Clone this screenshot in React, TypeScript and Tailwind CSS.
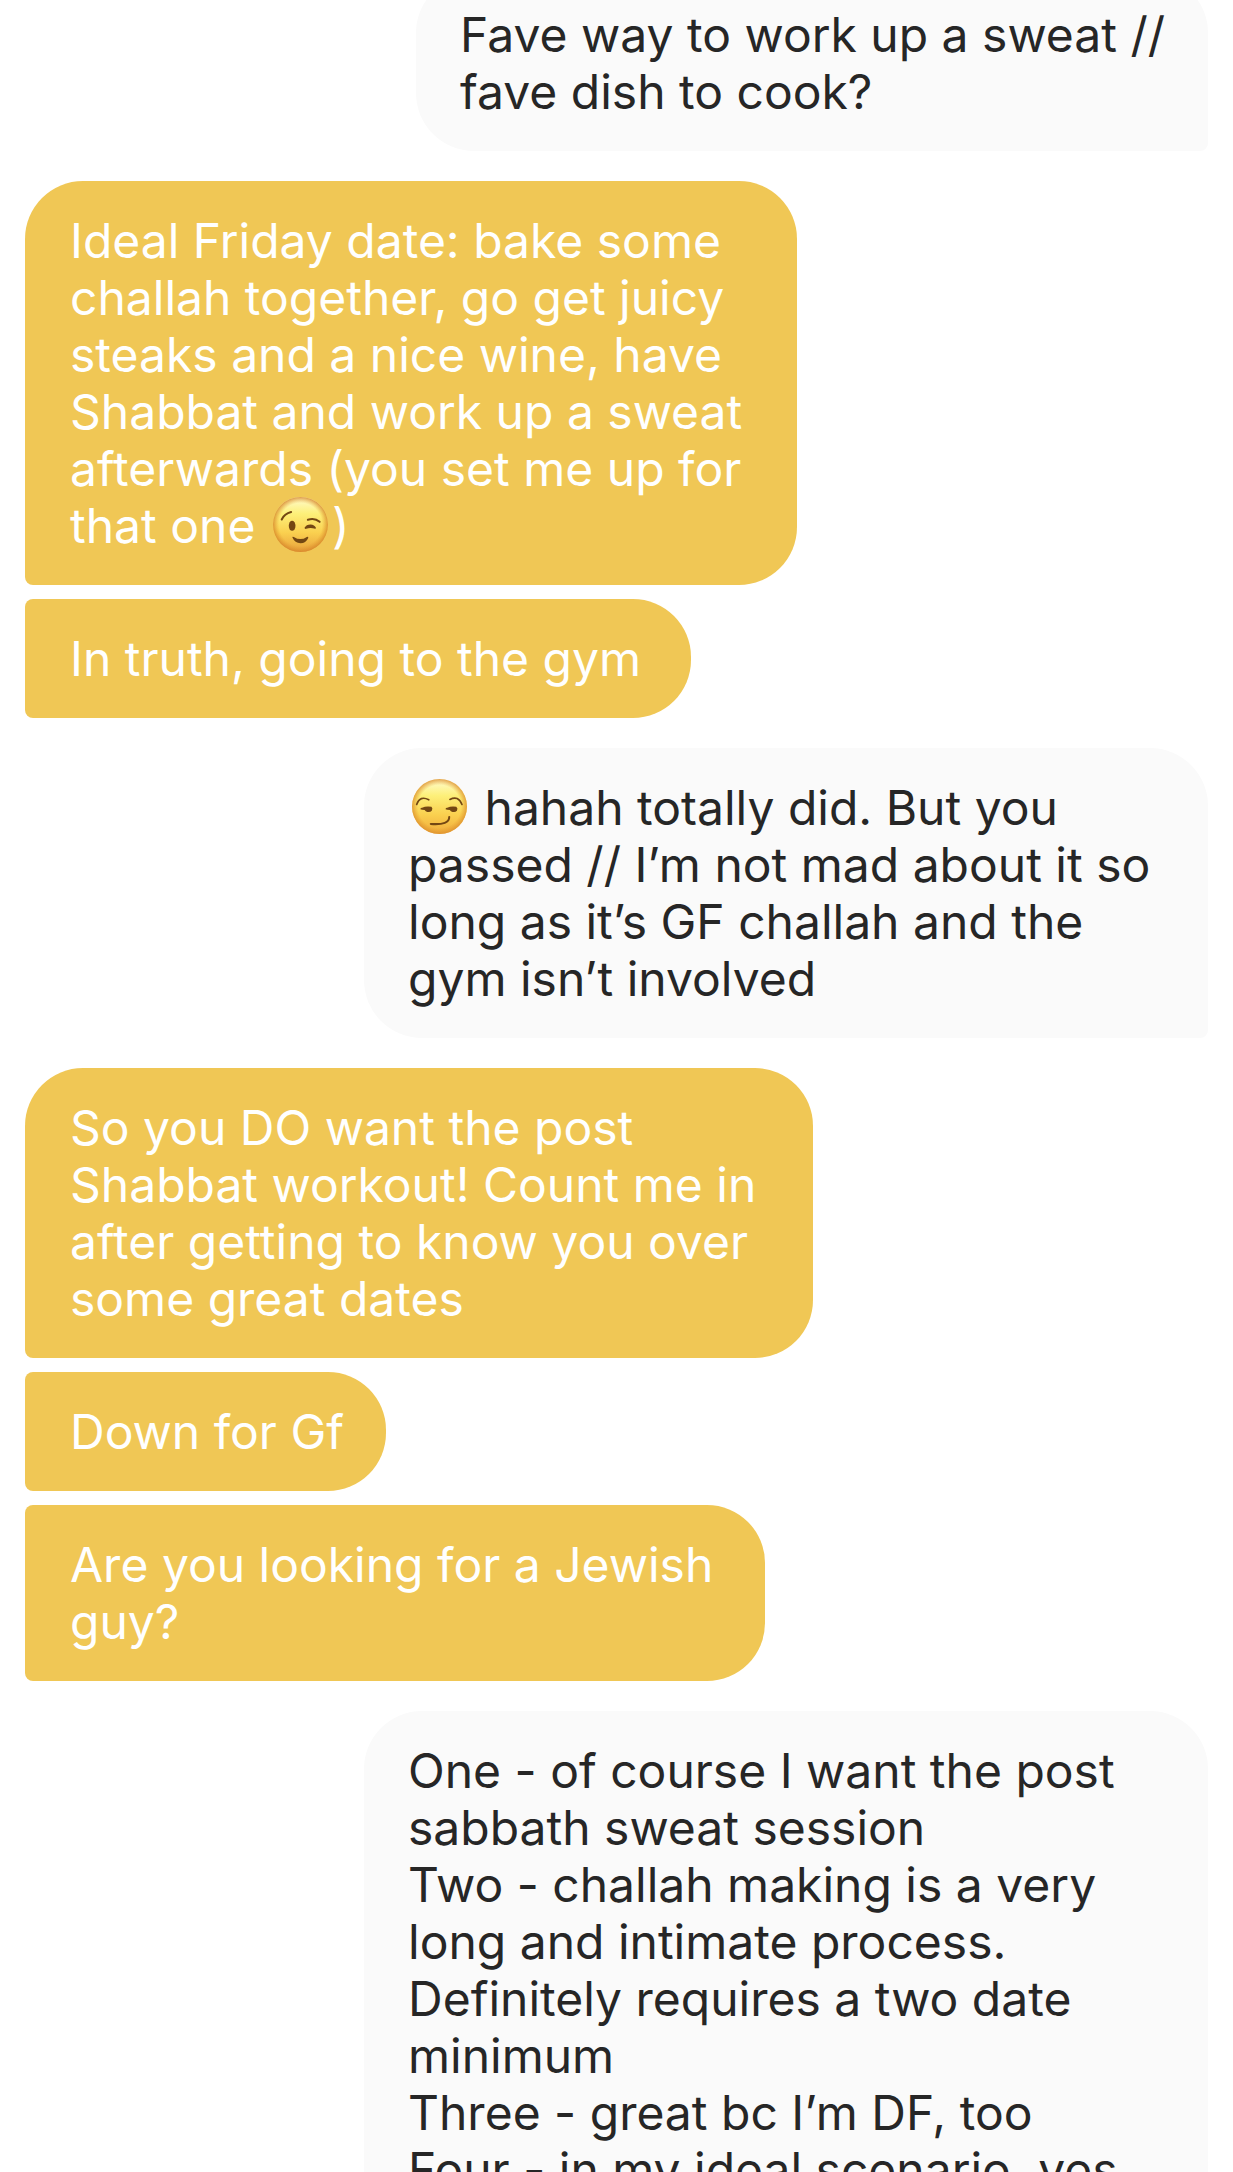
import clsx from "clsx";
import type { ReactNode } from "react";

function WinkEmoji() {
  return (
    <svg viewBox="44 26 164 164" className="mx-1 inline-block size-[55px] align-[-9px]" role="img" aria-label="winking face">
      <defs>
        <linearGradient id="wink-face" x1="0" y1="0" x2="0" y2="1">
          <stop offset="0" stopColor="#fffbd0" />
          <stop offset="0.3" stopColor="#fdf07a" />
          <stop offset="0.65" stopColor="#fad04f" />
          <stop offset="1" stopColor="#e8a03c" />
        </linearGradient>
        <radialGradient id="wink-edge">
          <stop offset="0.78" stopColor="#e39a2c" stopOpacity="0" />
          <stop offset="1" stopColor="#d5842a" stopOpacity="0.8" />
        </radialGradient>
      </defs>
      <circle cx="126" cy="108" r="82" fill="url(#wink-face)" />
      <circle cx="126" cy="108" r="82" fill="url(#wink-edge)" />
      <ellipse cx="101" cy="112" rx="10" ry="15" fill="#734713" />
      <g fill="none" stroke="#734713" strokeLinecap="round">
        <path d="M70 93 Q78 76 98 71" strokeWidth="6" />
        <path d="M148 94 Q168 87 183 100" strokeWidth="6" />
      </g>
      <path d="M138 118 Q143 108 156 108 Q168 109 172 118 Q172 122 167 120 Q155 116 143 121 Q138 122 138 118 Z" fill="#734713" />
      <path d="M102 147 Q101 143 106 145 Q126 158 145 145 Q150 143 149 148 Q142 164 126 164 Q109 164 102 147 Z" fill="#734713" />
    </svg>
  );
}

function SmirkEmoji() {
  return (
    <svg viewBox="36 26 164 164" className="mx-1 inline-block size-[55px] align-[-9px]" role="img" aria-label="smirking face">
      <defs>
        <linearGradient id="smirk-face" x1="0" y1="0" x2="0" y2="1">
          <stop offset="0" stopColor="#fffbd0" />
          <stop offset="0.3" stopColor="#fdf07a" />
          <stop offset="0.65" stopColor="#fad04f" />
          <stop offset="1" stopColor="#f0ab3c" />
        </linearGradient>
        <radialGradient id="smirk-edge">
          <stop offset="0.78" stopColor="#e39a2c" stopOpacity="0" />
          <stop offset="1" stopColor="#dc8f2e" stopOpacity="0.8" />
        </radialGradient>
      </defs>
      <circle cx="118" cy="108" r="82" fill="url(#smirk-face)" />
      <circle cx="118" cy="108" r="82" fill="url(#smirk-edge)" />
      <g fill="none" stroke="#734713" strokeLinecap="round">
        <path d="M50 102 Q60 74 86 88" strokeWidth="5" />
        <path d="M149 87 Q174 74 185 102" strokeWidth="5" />
        <path d="M92 160 Q148 164 147 139" strokeWidth="6" />
      </g>
      <path d="M61 116 Q61 112 66 112 Q78 106 94 109 Q99 114 95 121 Q88 128 77 122 Q76 118 66 118 Z" fill="#734713" />
      <path d="M136 116 Q136 112 141 112 Q153 106 168 109 Q174 114 170 121 Q163 128 152 122 Q151 118 141 118 Z" fill="#734713" />
    </svg>
  );
}

type Message = {
  id: number;
  from: "me" | "them";
  grouped?: boolean; // follows another bubble from the same person
  width: string;
  body: ReactNode;
};

const messages: Message[] = [
  {
    id: 1,
    from: "me",
    width: "w-[792px]",
    body: "Fave way to work up a sweat //\nfave dish to cook?",
  },
  {
    id: 2,
    from: "them",
    width: "w-[772px]",
    body: (
      <>
        {"Ideal Friday date: bake some\nchallah together, go get juicy\nsteaks and a nice wine, have\nShabbat and work up a sweat\nafterwards (you set me up for\nthat one "}
        <WinkEmoji />)
      </>
    ),
  },
  { id: 3, from: "them", grouped: true, width: "w-[666px]", body: "In truth, going to the gym" },
  {
    id: 4,
    from: "me",
    width: "w-[844px]",
    body: (
      <>
        <SmirkEmoji />
        {" hahah totally did. But you\npassed // I’m not mad about it so\nlong as it’s GF challah and the\ngym isn’t involved"}
      </>
    ),
  },
  {
    id: 5,
    from: "them",
    width: "w-[788px]",
    body: "So you DO want the post\nShabbat workout! Count me in\nafter getting to know you over\nsome great dates",
  },
  { id: 6, from: "them", grouped: true, width: "w-[361px]", body: "Down for Gf" },
  { id: 7, from: "them", grouped: true, width: "w-[740px]", body: "Are you looking for a Jewish\nguy?" },
  {
    id: 8,
    from: "me",
    width: "w-[844px]",
    body: "One - of course I want the post\nsabbath sweat session\nTwo - challah making is a very\nlong and intimate process.\nDefinitely requires a two date\nminimum\nThree - great bc I’m DF, too\nFour - in my ideal scenario, yes",
  },
];

function Bubble({ message }: { message: Message }) {
  const { from, grouped, width, body } = message;

  return (
    <li
      className={clsx(
        "max-w-full shrink-0 whitespace-pre-line py-[31px] text-[48px] leading-[57px]",
        width,
        from === "me"
          ? "self-end rounded-[58px] rounded-br-lg bg-[#fafafa] pl-11 text-[#262626]"
          : "self-start rounded-[58px] rounded-bl-lg bg-[#f0c755] pl-[45px] text-white",
        from === "them" && grouped && "rounded-tl-lg",
        grouped ? "mt-3.5" : "mt-[30px]"
      )}
    >
      {body}
    </li>
  );
}

export default function App() {
  return (
    <main className="h-screen overflow-hidden bg-white font-['Inter',sans-serif]">
      <ol className="-mt-[55px] flex flex-col px-[25px]">
        {messages.map((message) => (
          <Bubble key={message.id} message={message} />
        ))}
      </ol>
    </main>
  );
}
